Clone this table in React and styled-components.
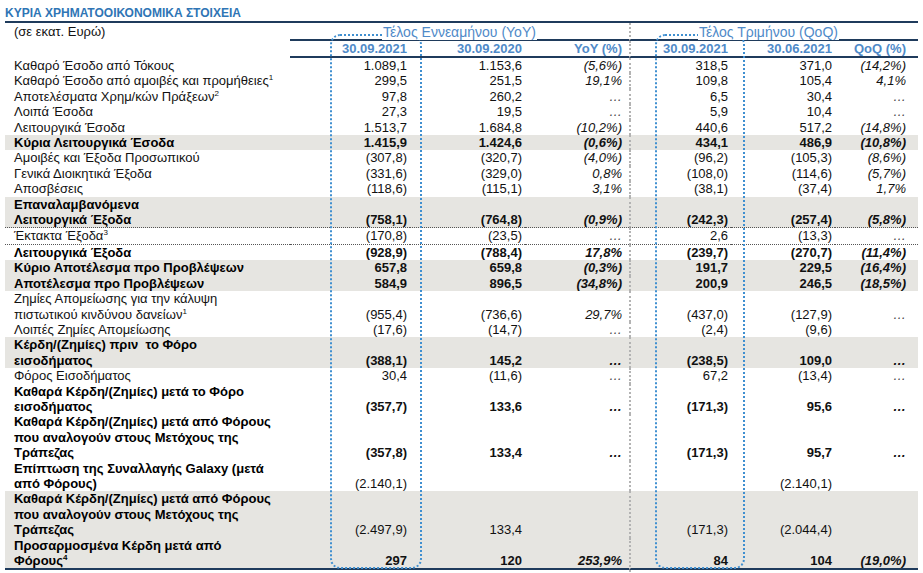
import React from 'react';
import styled, { createGlobalStyle } from 'styled-components';

const Global = createGlobalStyle`
  html, body { margin: 0; padding: 0; background: #ffffff; overflow: hidden; }
  body { font-family: "Liberation Sans", Arial, sans-serif; }
`;

const NAVY = '#1f3b5c';
const HEAD_BLUE = '#4f8ac8';
const SHADE = '#e6e5e1';

const Page = styled.div`
  position: relative;
  width: 923px;
  height: 573px;
  padding: 0 5px;
  box-sizing: border-box;
`;

const Title = styled.div`
  width: 913px;
  padding-top: 5px;
  height: 16px;
  line-height: 16px;
  font-size: 12px;
  font-weight: 700;
  color: #2f75b5;
  border-bottom: 2px solid ${NAVY};
`;

const Table = styled.table`
  width: 913px;
  table-layout: fixed;
  border-collapse: separate;
  border-spacing: 0;
  font-size: 13px;
  color: #111;
`;

const HeadLabel = styled.td`
  padding: 0 0 0 9px;
  height: ${p => p.$h}px;
  line-height: ${p => p.$h}px;
  text-align: left;
  vertical-align: middle;
  white-space: nowrap;
`;

const GroupHead = styled.td`
  height: 16px;
  padding: 0 ${p => p.$pr || 0}px 0 0;
  line-height: 14px;
  font-size: 14px;
  text-align: center;
  vertical-align: bottom;
  color: ${HEAD_BLUE};
  white-space: nowrap;
  border-bottom: 2px solid ${NAVY};
  border-left: ${p => (p.$sep ? '2px dotted #b3b3b3' : 'none')};
`;

const GroupText = styled.span`
  position: relative;
  z-index: 3;
  background: #ffffff;
  padding: 0 1px;
`;

const DateHead = styled.td`
  height: 15px;
  line-height: 15px;
  padding: 0 ${p => p.$pr}px 0 0;
  text-align: right;
  font-weight: 700;
  color: ${HEAD_BLUE};
  white-space: nowrap;
  border-bottom: ${p => (p.$rule ? `2px solid ${NAVY}` : 'none')};
  border-left: ${p => (p.$sep ? '2px dotted #b3b3b3' : 'none')};
`;

const LabelCell = styled.td`
  padding: 0 0 0 9px;
  line-height: 15.4px;
  text-align: left;
  vertical-align: top;
  white-space: nowrap;
  font-weight: ${p => (p.$bold ? 700 : 400)};
  color: ${p => (p.$bold ? '#000' : '#111')};
  background: ${p => (p.$shade ? SHADE : 'transparent')};
  border-bottom: ${p => (p.$dotted ? '1px dotted #555' : p.$rule ? `2px solid ${NAVY}` : 'none')};
`;

const NumCell = styled.td`
  padding: 0 ${p => p.$pr}px 0 0;
  line-height: 15.4px;
  text-align: right;
  vertical-align: bottom;
  white-space: nowrap;
  font-weight: ${p => (p.$bold ? 700 : 400)};
  font-style: ${p => (p.$italic ? 'italic' : 'normal')};
  color: ${p => (p.$muted ? '#444' : '#111')};
  background: ${p => (p.$shade ? SHADE : 'transparent')};
  border-left: ${p => (p.$sep ? '2px dotted #b3b3b3' : 'none')};
  border-bottom: ${p => (p.$dotted ? '1px dotted #555' : p.$rule ? `2px solid ${NAVY}` : 'none')};
`;

const Sup = styled.sup`
  font-size: 8px;
  line-height: 0;
  vertical-align: 5px;
`;

const Frame = styled.div`
  position: absolute;
  top: 34px;
  left: ${p => p.$left}px;
  width: ${p => p.$width}px;
  height: 535px;
  box-sizing: border-box;
  border: 2px dotted #3f8fd0;
  border-radius: 10px;
  z-index: 2;
  pointer-events: none;
`;

const COLS = [285, 120, 115, 104, 102, 104, 83];
const PADS = [3, 3, 7, 3, 3, 12];

const rows = [
  { label: 'Καθαρό Έσοδο από Τόκους', v: ['1.089,1', '1.153,6', '(5,6%)', '318,5', '371,0', '(14,2%)'] },
  { label: <>Καθαρό Έσοδο από αμοιβές και προμήθειες<Sup>1</Sup></>, v: ['299,5', '251,5', '19,1%', '109,8', '105,4', '4,1%'] },
  { label: <>Αποτελέσματα Χρημ/κών Πράξεων<Sup>2</Sup></>, v: ['97,8', '260,2', '…', '6,5', '30,4', '…'] },
  { label: 'Λοιπά Έσοδα', v: ['27,3', '19,5', '…', '5,9', '10,4', '…'] },
  { label: 'Λειτουργικά Έσοδα', v: ['1.513,7', '1.684,8', '(10,2%)', '440,6', '517,2', '(14,8%)'] },
  { label: 'Κύρια Λειτουργικά Έσοδα', bold: true, shade: true, v: ['1.415,9', '1.424,6', '(0,6%)', '434,1', '486,9', '(10,8%)'] },
  { label: 'Αμοιβές και Έξοδα Προσωπικού', v: ['(307,8)', '(320,7)', '(4,0%)', '(96,2)', '(105,3)', '(8,6%)'] },
  { label: 'Γενικά Διοικητικά Έξοδα', v: ['(331,6)', '(329,0)', '0,8%', '(108,0)', '(114,6)', '(5,7%)'] },
  { label: 'Αποσβέσεις', v: ['(118,6)', '(115,1)', '3,1%', '(38,1)', '(37,4)', '1,7%'] },
  { label: <>Επαναλαμβανόμενα<br />Λειτουργικά Έξοδα</>, bold: true, shade: true, dotted: true, v: ['(758,1)', '(764,8)', '(0,9%)', '(242,3)', '(257,4)', '(5,8%)'] },
  { label: <>Έκτακτα Έξοδα<Sup>3</Sup></>, dotted: true, v: ['(170,8)', '(23,5)', '…', '2,6', '(13,3)', '…'] },
  { label: 'Λειτουργικά Έξοδα', bold: true, v: ['(928,9)', '(788,4)', '17,8%', '(239,7)', '(270,7)', '(11,4%)'] },
  { label: 'Κύριο Αποτέλεσμα προ Προβλέψεων', bold: true, shade: true, v: ['657,8', '659,8', '(0,3%)', '191,7', '229,5', '(16,4%)'] },
  { label: 'Αποτέλεσμα προ Προβλέψεων', bold: true, shade: true, v: ['584,9', '896,5', '(34,8%)', '200,9', '246,5', '(18,5%)'] },
  { label: <>Ζημίες Απομείωσης για την κάλυψη<br />πιστωτικού κινδύνου δανείων<Sup>1</Sup></>, v: ['(955,4)', '(736,6)', '29,7%', '(437,0)', '(127,9)', '…'] },
  { label: 'Λοιπές Ζημίες Απομείωσης', v: ['(17,6)', '(14,7)', '…', '(2,4)', '(9,6)', ''] },
  { label: <>Κέρδη/(Ζημίες) πριν&nbsp; το Φόρο<br />εισοδήματος</>, bold: true, shade: true, v: ['(388,1)', '145,2', '…', '(238,5)', '109,0', '…'] },
  { label: 'Φόρος Εισοδήματος', v: ['30,4', '(11,6)', '…', '67,2', '(13,4)', '…'] },
  { label: <>Καθαρά Κέρδη/(Ζημίες) μετά το Φόρο<br />εισοδήματος</>, bold: true, v: ['(357,7)', '133,6', '…', '(171,3)', '95,6', '…'] },
  { label: <>Καθαρά Κέρδη/(Ζημίες) μετά από Φόρους<br />που αναλογούν στους Μετόχους της<br />Τράπεζας</>, bold: true, v: ['(357,8)', '133,4', '…', '(171,3)', '95,7', '…'] },
  { label: <>Επίπτωση της Συναλλαγής Galaxy (μετά<br />από Φόρους)</>, bold: true, numBold: false, v: ['(2.140,1)', '', '', '', '(2.140,1)', ''] },
  { label: <>Καθαρά Κέρδη/(Ζημίες) μετά από Φόρους<br />που αναλογούν στους Μετόχους της<br />Τράπεζας</>, bold: true, numBold: false, shade: true, v: ['(2.497,9)', '133,4', '', '(171,3)', '(2.044,4)', ''] },
  { label: <>Προσαρμοσμένα Κέρδη μετά από<br />Φόρους<Sup>4</Sup></>, bold: true, shade: true, rule: true, v: ['297', '120', '253,9%', '84', '104', '(19,0%)'] },
];

const dates = ['30.09.2021', '30.09.2020', 'YoY (%)', '30.09.2021', '30.06.2021', 'QoQ (%)'];
const nextDates = ['30.09.2021', '30.09.2020', '', '30.09.2021', '30.06.2021', ''];

export default function App() {
  return (
    <Page>
      <Global />
      <Title>ΚΥΡΙΑ ΧΡΗΜΑΤΟΟΙΚΟΝΟΜΙΚΑ ΣΤΟΙΧΕΙΑ</Title>
      <Table>
        <colgroup>
          {COLS.map((w, i) => (
            <col key={i} style={{ width: w }} />
          ))}
        </colgroup>
        <tbody>
          <tr>
            <HeadLabel $h={16}>(σε εκατ. Ευρώ)</HeadLabel>
            <GroupHead colSpan={3}>
              <GroupText>Τέλος Εννεαμήνου (YoY)</GroupText>
            </GroupHead>
            <GroupHead colSpan={3} $sep $pr={12}>
              <GroupText>Τέλος Τριμήνου (QoQ)</GroupText>
            </GroupHead>
          </tr>
          <tr>
            <HeadLabel $h={17} />
            {dates.map((d, i) => (
              <DateHead key={i} $pr={PADS[i]} $sep={i === 3} $rule colSpan={i === 5 ? 2 : 1}>
                {d}
              </DateHead>
            ))}
          </tr>
          {rows.map((r, ri) => {
            const numBold = r.numBold === undefined ? !!r.bold : r.numBold;
            return (
              <tr key={ri}>
                <LabelCell $bold={r.bold} $shade={r.shade} $dotted={r.dotted} $rule={r.rule}>
                  {r.label}
                </LabelCell>
                {r.v.map((val, ci) => (
                  <NumCell
                    key={ci}
                    colSpan={ci === 5 ? 2 : 1}
                    $pr={PADS[ci]}
                    $bold={numBold}
                    $italic={ci === 2 || ci === 5}
                    $muted={val === '…' && !numBold}
                    $shade={r.shade}
                    $sep={ci === 3}
                    $dotted={r.dotted}
                    $rule={r.rule}
                  >
                    {val}
                  </NumCell>
                ))}
              </tr>
            );
          })}
          <tr>
            <HeadLabel $h={16} />
            {nextDates.map((d, i) => (
              <DateHead key={i} $pr={PADS[i]} $sep={i === 3} colSpan={i === 5 ? 2 : 1}>
                {d}
              </DateHead>
            ))}
          </tr>
        </tbody>
      </Table>
      <Frame $left={330} $width={92} />
      <Frame $left={655} $width={90} />
    </Page>
  );
}
